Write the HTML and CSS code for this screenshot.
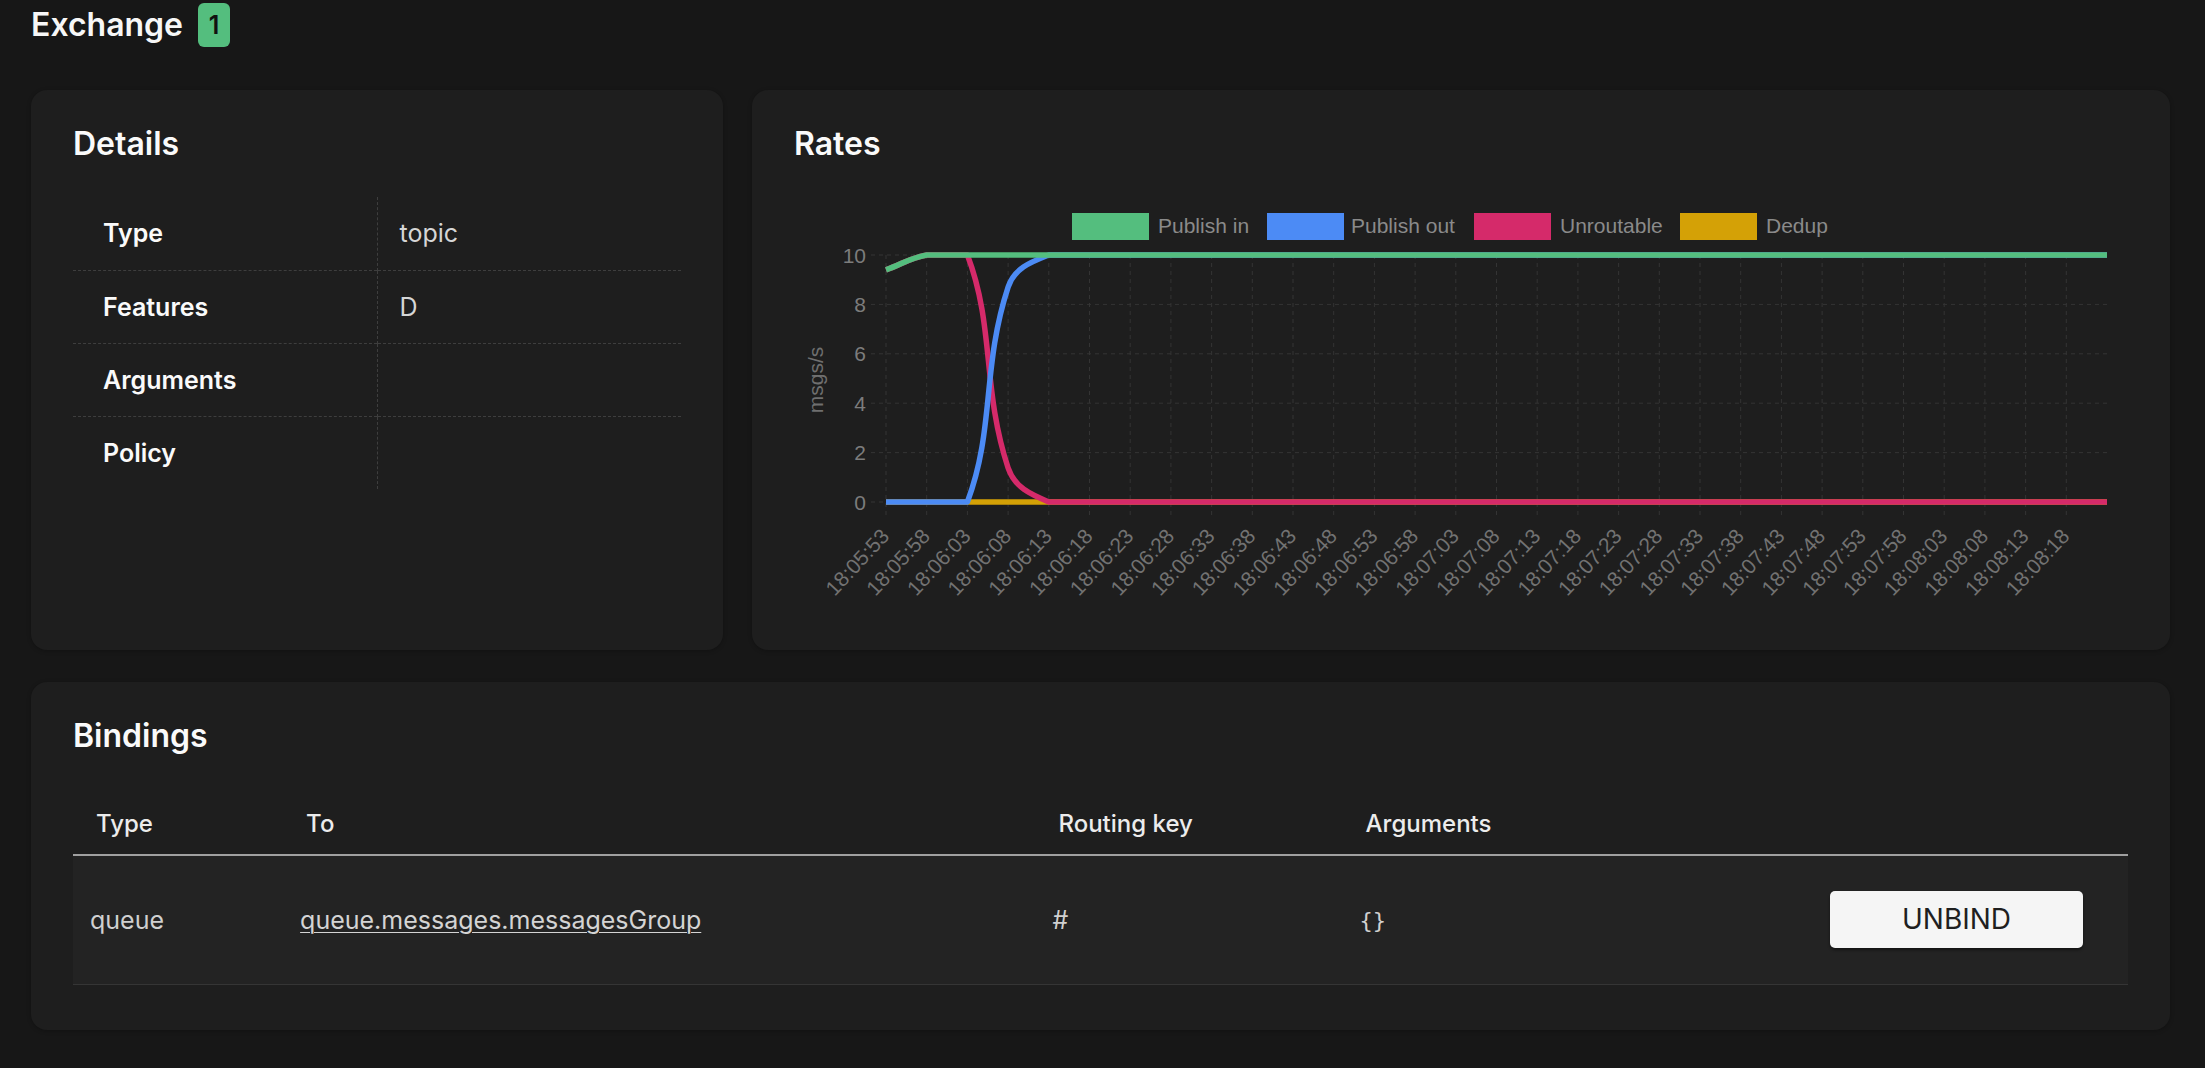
FILE: index.html
```html
<!DOCTYPE html>
<html lang="en">
<head>
<meta charset="utf-8">
<title>Exchange</title>
<link rel="stylesheet" href="styles.css">
</head>
<body>
<main class="page">
  <header class="page-head">
    <h1 class="page-title">Exchange</h1>
    <span class="badge">1</span>
  </header>

  <div class="top-grid">
    <section class="card">
      <h2 class="card-title">Details</h2>
      <table class="details">
        <tr><th>Type</th><td>topic</td></tr>
        <tr><th>Features</th><td>D</td></tr>
        <tr><th>Arguments</th><td></td></tr>
        <tr><th>Policy</th><td></td></tr>
      </table>
    </section>

    <section class="card">
      <h2 class="card-title">Rates</h2>
      <svg class="chart" width="1330" height="452" viewBox="794 163 1330 452" xmlns="http://www.w3.org/2000/svg">
        <g class="legend">
          <rect x="1072" y="213" width="77" height="27" fill="#54be7e"/>
          <text x="1158" y="233">Publish in</text>
          <rect x="1267" y="213" width="77" height="27" fill="#4c8bf5"/>
          <text x="1351" y="233">Publish out</text>
          <rect x="1474" y="213" width="77" height="27" fill="#d52a6a"/>
          <text x="1560" y="233">Unroutable</text>
          <rect x="1680" y="213" width="77" height="27" fill="#d4a106"/>
          <text x="1766" y="233">Dedup</text>
        </g>

        <path class="grid" d="M871 255H2107M871 304.4H2107M871 353.8H2107M871 403.2H2107M871 452.6H2107M871 502H2107M886 255V517M926.7 255V517M967.4 255V517M1008.1 255V517M1048.8 255V517M1089.5 255V517M1130.2 255V517M1170.9 255V517M1211.6 255V517M1252.3 255V517M1293 255V517M1333.7 255V517M1374.4 255V517M1415.1 255V517M1455.8 255V517M1496.5 255V517M1537.2 255V517M1577.9 255V517M1618.6 255V517M1659.3 255V517M1700 255V517M1740.7 255V517M1781.4 255V517M1822.1 255V517M1862.8 255V517M1903.5 255V517M1944.2 255V517M1984.9 255V517M2025.6 255V517M2066.3 255V517"/>

        <g class="ylabels">
          <text x="866" y="255">10</text>
          <text x="866" y="304.4">8</text>
          <text x="866" y="353.8">6</text>
          <text x="866" y="403.2">4</text>
          <text x="866" y="452.6">2</text>
          <text x="866" y="502">0</text>
        </g>
        <text class="ytitle" transform="translate(815 380) rotate(-90)">msgs/s</text>

        <g class="xlabels">
          <text transform="translate(885 532) rotate(-47)">18:05:53</text>
          <text transform="translate(925.7 532) rotate(-47)">18:05:58</text>
          <text transform="translate(966.4 532) rotate(-47)">18:06:03</text>
          <text transform="translate(1007.1 532) rotate(-47)">18:06:08</text>
          <text transform="translate(1047.8 532) rotate(-47)">18:06:13</text>
          <text transform="translate(1088.5 532) rotate(-47)">18:06:18</text>
          <text transform="translate(1129.2 532) rotate(-47)">18:06:23</text>
          <text transform="translate(1169.9 532) rotate(-47)">18:06:28</text>
          <text transform="translate(1210.6 532) rotate(-47)">18:06:33</text>
          <text transform="translate(1251.3 532) rotate(-47)">18:06:38</text>
          <text transform="translate(1292 532) rotate(-47)">18:06:43</text>
          <text transform="translate(1332.7 532) rotate(-47)">18:06:48</text>
          <text transform="translate(1373.4 532) rotate(-47)">18:06:53</text>
          <text transform="translate(1414.1 532) rotate(-47)">18:06:58</text>
          <text transform="translate(1454.8 532) rotate(-47)">18:07:03</text>
          <text transform="translate(1495.5 532) rotate(-47)">18:07:08</text>
          <text transform="translate(1536.2 532) rotate(-47)">18:07:13</text>
          <text transform="translate(1576.9 532) rotate(-47)">18:07:18</text>
          <text transform="translate(1617.6 532) rotate(-47)">18:07:23</text>
          <text transform="translate(1658.3 532) rotate(-47)">18:07:28</text>
          <text transform="translate(1699 532) rotate(-47)">18:07:33</text>
          <text transform="translate(1739.7 532) rotate(-47)">18:07:38</text>
          <text transform="translate(1780.4 532) rotate(-47)">18:07:43</text>
          <text transform="translate(1821.1 532) rotate(-47)">18:07:48</text>
          <text transform="translate(1861.8 532) rotate(-47)">18:07:53</text>
          <text transform="translate(1902.5 532) rotate(-47)">18:07:58</text>
          <text transform="translate(1943.2 532) rotate(-47)">18:08:03</text>
          <text transform="translate(1983.9 532) rotate(-47)">18:08:08</text>
          <text transform="translate(2024.6 532) rotate(-47)">18:08:13</text>
          <text transform="translate(2065.3 532) rotate(-47)">18:08:18</text>
        </g>

        <g class="lines">
          <path class="dedup" d="M886 502H2107"/>
          <path class="unroutable" d="M886 269.8C902.3 263.9 909.9 258 926.7 255H967.4C994.8 326.7 981.9 388.5 1008.1 467.9C1014.5 487.3 1030.4 494.3 1048.8 502H2107"/>
          <path class="pubout" d="M886 502H967.4C994.8 429.5 981.8 367 1008.1 287.1C1014.3 268.2 1030.6 262.2 1048.8 255H2107"/>
          <path class="pubin" d="M886 269.8C902.3 263.9 909.9 258 926.7 255H2107"/>
        </g>
      </svg>
    </section>
  </div>

  <section class="card bindings-card">
    <h2 class="card-title">Bindings</h2>
    <table class="bindings">
      <colgroup>
        <col class="c-type"><col class="c-to"><col class="c-key"><col class="c-args"><col class="c-act">
      </colgroup>
      <thead>
        <tr><th>Type</th><th>To</th><th>Routing key</th><th>Arguments</th><th></th></tr>
      </thead>
      <tbody>
        <tr>
          <td>queue</td>
          <td><a class="link" href="#">queue.messages.messagesGroup</a></td>
          <td>#</td>
          <td><span class="mono">{}</span></td>
          <td class="act"><button class="btn" type="button">UNBIND</button></td>
        </tr>
      </tbody>
    </table>
  </section>
</main>
</body>
</html>
```

FILE: styles.css
```css
* { box-sizing: border-box; }

html, body { margin: 0; }

body {
  background: #171717;
  color: #f2f2f2;
  font-family: Inter, "Noto Sans", sans-serif;
}

.page {
  padding: 0 35px 36px 31px;
}

.page-head {
  display: flex;
  align-items: center;
  gap: 15px;
  height: 50px;
  margin-bottom: 40px;
}

.page-title {
  margin: 0;
  font-size: 32px;
  font-weight: 600;
  line-height: 38px;
  color: #f7f7f7;
}

.badge {
  width: 32px;
  text-align: center;
  background: #54be7e;
  color: #111;
  font-size: 25px;
  font-weight: 600;
  line-height: 36px;
  padding: 4px 0;
  border-radius: 6px;
}

.top-grid {
  display: grid;
  grid-template-columns: 692px 1fr;
  gap: 29px;
  margin-bottom: 32px;
}

.card {
  background: #1e1e1e;
  border-radius: 16px;
  padding: 35px 42px;
  box-shadow: 0 1px 4px rgba(0, 0, 0, 0.25);
}

.card-title {
  margin: 0;
  font-size: 32px;
  font-weight: 600;
  line-height: 38px;
  color: #fafafa;
}

/* Details */
.details {
  margin-top: 34px;
  width: 100%;
  border-collapse: collapse;
  table-layout: fixed;
  font-size: 25px;
  line-height: 30px;
}

.details th,
.details td {
  height: 73px;
  vertical-align: middle;
}

.details tr + tr th,
.details tr + tr td {
  border-top: 1px dashed #3e3e3e;
}

.details th {
  text-align: left;
  font-weight: 600;
  color: #fafafa;
  padding: 0 0 0 30px;
}

.details td {
  border-left: 1px dashed #3e3e3e;
  padding: 0 0 0 22px;
  color: #d6d6d6;
}

/* Chart */
.chart {
  display: block;
}

.chart text {
  font-family: "Liberation Sans", Arial, sans-serif;
  font-size: 21px;
  fill: #7c7c7c;
}

.legend text {
  fill: #8a8a8a;
}

.grid {
  fill: none;
  stroke: #343434;
  stroke-width: 1;
  stroke-dasharray: 4 4;
}

.ylabels text {
  text-anchor: end;
  dominant-baseline: central;
}

.chart .ytitle {
  text-anchor: middle;
  dominant-baseline: central;
  fill: #6f6f6f;
}

.xlabels text {
  text-anchor: end;
  dominant-baseline: central;
  fill: #727272;
}

.lines path {
  fill: none;
  stroke-width: 5.5;
  stroke-linejoin: round;
}

.lines .pubin { stroke: #54be7e; }
.lines .pubout { stroke: #4c8bf5; }
.lines .unroutable { stroke: #d52a6a; }
.lines .dedup { stroke: #d4a106; }

/* Bindings */
.bindings {
  margin: 36px 0 10px;
  width: 100%;
  border-collapse: collapse;
  table-layout: fixed;
  font-size: 24px;
  line-height: 28px;
}

.c-type { width: 210px; }
.c-to { width: 752px; }
.c-key { width: 307px; }
.c-args { width: 455px; }
.c-act { width: 330px; }

.bindings th {
  text-align: left;
  font-weight: 500;
  color: #ececec;
  padding: 19px 23px 16px;
  border-bottom: 2px solid #a0a0a0;
}

.bindings td {
  background: #232323;
  color: #d0d0d0;
  font-size: 25px;
  padding: 35px 17px 36px;
  border-bottom: 1px solid #353535;
  vertical-align: middle;
}

.bindings td.act {
  text-align: right;
  padding-right: 45px;
}

.link {
  color: #d4d4d4;
  text-decoration: underline;
  text-underline-offset: 3px;
  text-decoration-thickness: 1px;
}

.mono {
  font-family: "DejaVu Sans Mono", "Liberation Mono", monospace;
  font-size: 22px;
}

.btn {
  font-family: Inter, "Noto Sans", sans-serif;
  font-size: 28px;
  font-weight: 400;
  line-height: 33px;
  width: 253px;
  padding: 12px 0;
  background: #f5f5f5;
  color: #1f1f1f;
  border: 0;
  border-radius: 5px;
  box-shadow: 0 2px 3px rgba(0, 0, 0, 0.45);
  cursor: pointer;
}
```
